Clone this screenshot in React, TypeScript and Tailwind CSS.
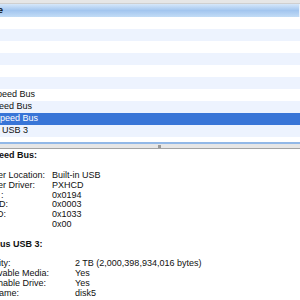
const rows: { text: string; offset: string; selected?: boolean }[] = [
  { text: "", offset: "ml-0" },
  { text: "", offset: "ml-0" },
  { text: "", offset: "ml-0" },
  { text: "", offset: "ml-0" },
  { text: "", offset: "ml-0" },
  { text: "", offset: "ml-0" },
  { text: "peed Bus", offset: "ml-[-3px]" },
  { text: "eed Bus", offset: "ml-[-1px]" },
  { text: "peed Bus", offset: "ml-0", selected: true },
  { text: "USB 3", offset: "ml-[2px]" },
];

function Line({ label, value, col, offset = "ml-0" }: { label: string; value: string; col: string; offset?: string }) {
  return (
    <div className="flex h-[9.85px] items-center whitespace-nowrap">
      <div className={`${col} shrink-0`}>
        <span className={offset}>{label}</span>
      </div>
      <span>{value}</span>
    </div>
  );
}

function App() {
  return (
    <div className="w-[300px] h-[300px] overflow-hidden bg-white text-[9px] text-[#111] font-['Liberation_Sans',Arial,sans-serif]">
      <div className="h-[4px] bg-[#e6e6e6] border-b border-[#cfcfcf]"></div>
      <div className="h-[13px] flex items-center bg-gradient-to-b from-[#d6e7f9] via-[#a3c6ef] to-[#c2dcf6] border-r border-[#e8f1fb]">
        <span className="font-bold ml-[-2px]">e</span>
      </div>
      <div className="flex flex-col">
        {rows.map((r, i) => (
          <div
            key={i}
            className={`h-[12px] flex items-center whitespace-nowrap ${
              r.selected ? "bg-[#3875d7] text-white" : i % 2 === 0 ? "bg-white" : "bg-[#edf3fe]"
            }`}
          >
            <span className={r.offset}>{r.text}</span>
          </div>
        ))}
      </div>
      <div className="h-[5px] bg-white"></div>
      <div className="h-[2px] bg-[#92b8e7]"></div>
      <div className="h-[4px] bg-[#e6e6e6] border-b border-[#a3a3a3] box-content flex items-center">
        <div className="ml-[158px] w-[3px] h-[3px] bg-[#9a9a9a]"></div>
      </div>
      <div className="pt-[2px] flex flex-col">
        <div className="h-[9.85px] flex items-center font-bold ml-[-1px]">eed Bus:</div>
        <div className="h-[9.85px]"></div>
        <Line label="er Location:" value="Built-in USB" col="w-[52px]" offset="ml-[-2px]" />
        <Line label="er Driver:" value="PXHCD" col="w-[52px]" offset="ml-[-2px]" />
        <Line label=":" value="0x0194" col="w-[52px]" offset="ml-[1px]" />
        <Line label="D:" value="0x0003" col="w-[52px]" offset="ml-[-1px]" />
        <Line label="D:" value="0x1033" col="w-[52px]" offset="ml-[-3px]" />
        <Line label="" value="0x00" col="w-[52px]" />
        <div className="h-[9.85px]"></div>
        <div className="h-[9.85px] flex items-center font-bold">us USB 3:</div>
        <div className="h-[9.85px]"></div>
        <Line label="ity:" value="2 TB (2,000,398,934,016 bytes)" col="w-[75px]" offset="ml-[-1px]" />
        <Line label="vable Media:" value="Yes" col="w-[75px]" offset="ml-[-2px]" />
        <Line label="hable Drive:" value="Yes" col="w-[75px]" offset="ml-[-2px]" />
        <Line label="ame:" value="disk5" col="w-[75px]" offset="ml-[-1px]" />
        <Line label="ID:" value="0x1234" col="w-[75px]" />
      </div>
    </div>
  );
}

export default App;
